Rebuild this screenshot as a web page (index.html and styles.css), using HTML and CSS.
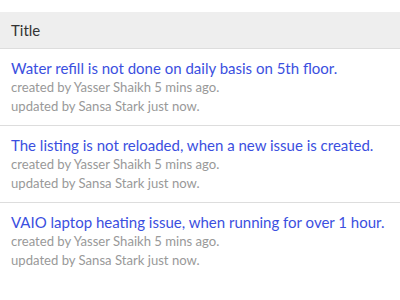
FILE: index.html
```html
<!DOCTYPE html>
<html lang="en">
<head>
  <meta charset="UTF-8">
  <meta name="viewport" content="width=device-width, initial-scale=1.0">
  <title>Issues</title>
  <link rel="stylesheet" href="styles.css">
</head>
<body>
  <div class="issue-list">
    <div class="list-header">Title</div>

    <div class="issue-row">
      <a href="#" class="issue-title">Water refill is not done on daily basis on 5th floor.</a>
      <div class="issue-meta">created by Yasser Shaikh 5 mins ago.</div>
      <div class="issue-meta">updated by Sansa Stark just now.</div>
    </div>

    <div class="issue-row">
      <a href="#" class="issue-title">The listing is not reloaded, when a new issue is created.</a>
      <div class="issue-meta">created by Yasser Shaikh 5 mins ago.</div>
      <div class="issue-meta">updated by Sansa Stark just now.</div>
    </div>

    <div class="issue-row">
      <a href="#" class="issue-title">VAIO laptop heating issue, when running for over 1 hour.</a>
      <div class="issue-meta">created by Yasser Shaikh 5 mins ago.</div>
      <div class="issue-meta">updated by Sansa Stark just now.</div>
    </div>
  </div>
</body>
</html>
```

FILE: styles.css
```css
:root {
  --link: #3b4fe0;
  --text: #333;
  --text-light: #999;
  --border: #ddd;
  --header-bg: #eee;
}

* {
  margin: 0;
  padding: 0;
  box-sizing: border-box;
  font-family: Lato, 'Noto Sans', sans-serif;
}

body {
  background: white;
  color: var(--text);
}

.issue-list {
  padding-top: 12px;
}

/* Header */
.list-header {
  background: var(--header-bg);
  border-bottom: 1px solid var(--border);
  padding: 0 11px;
  height: 37px;
  line-height: 36px;
  font-size: 15px;
}

/* Rows */
.issue-row {
  padding: 10px 11px;
}

.issue-row + .issue-row {
  border-top: 1px solid var(--border);
}

.issue-title {
  display: block;
  color: var(--link);
  text-decoration: none;
  font-size: 15px;
  line-height: 19px;
}

.issue-meta {
  color: var(--text-light);
  font-size: 13.1px;
  line-height: 18.5px;
}
```
